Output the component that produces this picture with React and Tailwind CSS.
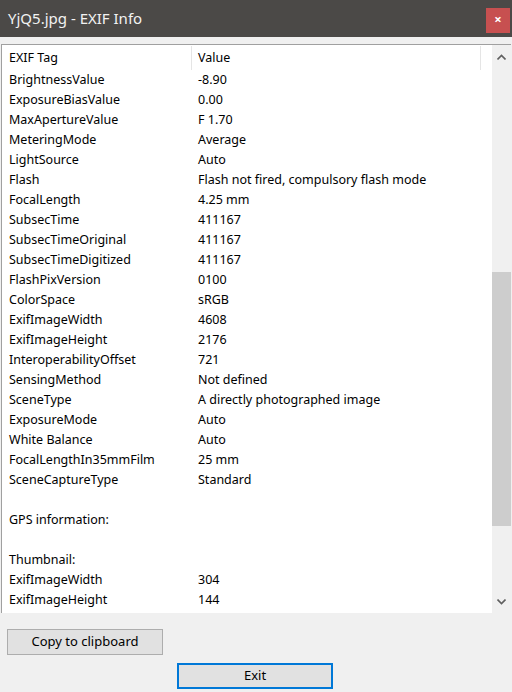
import React from 'react';

const rows = [
  ['BrightnessValue', '-8.90'],
  ['ExposureBiasValue', '0.00'],
  ['MaxApertureValue', 'F 1.70'],
  ['MeteringMode', 'Average'],
  ['LightSource', 'Auto'],
  ['Flash', 'Flash not fired, compulsory flash mode'],
  ['FocalLength', '4.25 mm'],
  ['SubsecTime', '411167'],
  ['SubsecTimeOriginal', '411167'],
  ['SubsecTimeDigitized', '411167'],
  ['FlashPixVersion', '0100'],
  ['ColorSpace', 'sRGB'],
  ['ExifImageWidth', '4608'],
  ['ExifImageHeight', '2176'],
  ['InteroperabilityOffset', '721'],
  ['SensingMethod', 'Not defined'],
  ['SceneType', 'A directly photographed image'],
  ['ExposureMode', 'Auto'],
  ['White Balance', 'Auto'],
  ['FocalLengthIn35mmFilm', '25 mm'],
  ['SceneCaptureType', 'Standard'],
  ['', ''],
  ['GPS information:', ''],
  ['', ''],
  ['Thumbnail:', ''],
  ['ExifImageWidth', '304'],
  ['ExifImageHeight', '144'],
];

function Chevron({ down }) {
  return (
    <svg width="9" height="6" viewBox="0 0 9 6" className={down ? 'rotate-180' : ''}>
      <path d="M0.5 5.5 L4.5 1.5 L8.5 5.5" fill="none" stroke="#606060" strokeWidth="1.6" />
    </svg>
  );
}

export default function App() {
  return (
    <div
      className="w-[512px] h-[692px] bg-[#f0f0f0] flex flex-col text-[12.5px] text-black"
      style={{ fontFamily: '"Noto Sans", "Open Sans", sans-serif' }}
    >
      {/* Title bar */}
      <div className="h-[37px] bg-[#4b4947] flex items-center justify-between pl-[8px] pr-[2px]">
        <span className="text-[15px] text-[#f2f2f2]">YjQ5.jpg - EXIF Info</span>
        <div className="w-[24px] h-[25px] bg-[#c75050] flex items-center justify-center text-white text-[13px] font-bold mt-[3px]">
          ×
        </div>
      </div>

      {/* List */}
      <div className="mt-[7px] ml-[1px] mr-[1px] h-[569px] border-l border-t border-[#a0a0a0] flex">
        <div className="flex-1 bg-white overflow-hidden">
          <div className="h-[25px] pt-[1px] flex items-center">
            <div className="w-[190px] h-full flex items-center pl-[7px] border-r border-[#e5e5e5]">EXIF Tag</div>
            <div className="w-[289px] h-full flex items-center pl-[6px] border-r border-[#e5e5e5]">Value</div>
          </div>
          {rows.map(([k, v], i) => (
            <div key={i} className="h-[20px] flex items-center">
              <div className="w-[189px] pl-[7px] whitespace-nowrap">{k}</div>
              <div className="pl-[7px] whitespace-nowrap">{v}</div>
            </div>
          ))}
        </div>
        <div className="w-[19px] bg-[#f0f0f0] flex flex-col">
          <div className="h-[24px] flex items-center justify-center pb-[1px]">
            <Chevron />
          </div>
          <div className="h-[203px]" />
          <div className="h-[254px] bg-[#cdcdcd]" />
          <div className="flex-1 flex items-end justify-center pb-[8px]">
            <Chevron down />
          </div>
        </div>
      </div>

      {/* Buttons */}
      <div className="mt-[16px] ml-[7px] w-[156px] h-[26px] border border-[#adadad] bg-[#e1e1e1] flex items-center justify-center text-[13px]">
        Copy to clipboard
      </div>
      <div className="mt-[8px] ml-[177px] w-[156px] h-[26px] border-2 border-[#0078d7] bg-[#e1e1e1] flex items-center justify-center text-[13px]">
        Exit
      </div>
    </div>
  );
}
